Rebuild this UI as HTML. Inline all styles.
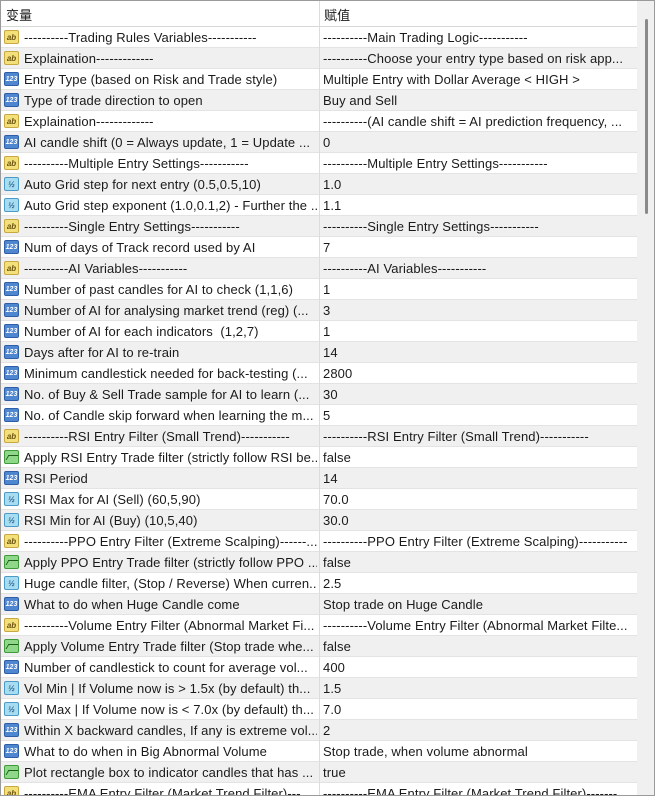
<!DOCTYPE html>
<html><head><meta charset="utf-8"><style>
*{margin:0;padding:0;box-sizing:border-box}
body{width:655px;height:796px;overflow:hidden;background:#fff;font-family:"Liberation Sans","Noto Sans CJK SC",sans-serif;font-size:13px;letter-spacing:0.1px;color:#1a1a1a;position:relative}
.wrap{position:absolute;left:0;top:0;width:655px;height:796px;border:1px solid #9a9a9a;overflow:hidden}
.hdr{position:absolute;left:0;top:0;width:636px;height:26px;border-bottom:1px solid #d8d8d8;background:#fff}
.hdr span{position:absolute;top:4px}
.rows{position:absolute;left:0;top:26px;width:636px}
.r{position:relative;height:21px;border-bottom:1px solid #e3e3e3;white-space:nowrap}
.r:nth-child(odd){background:#fff}
.r:nth-child(even){background:#f0f0f0}
.a{position:absolute;left:23px;top:3px;width:293px;overflow:hidden}
.b{position:absolute;left:322px;top:3px;width:312px;overflow:hidden}
.div{position:absolute;left:318px;top:0;width:1px;height:796px;background:#dcdcdc}
.i{position:absolute;left:3px;top:3px;width:15px;height:14px;border-radius:2px;font-size:8px;line-height:13px;text-align:center;font-weight:bold;letter-spacing:0}
.ab{background:#f3e07a;border:1px solid #c8a840;color:#6b5210}
.n{background:#4f86d0;border:1px solid #2f5ea8;color:#fff;font-size:7px}
.v{background:#a8dcf0;border:1px solid #4a9cc8;color:#1f5c8a}
.g{background:#8fd88a;border:1px solid #3f9a3a}
.g:after{content:"";position:absolute;left:2px;top:4px;width:9px;height:4px;border-left:1.5px solid #1d5c1a;border-top:1.5px solid #1d5c1a;transform:skewX(-30deg)}
.sb{position:absolute;left:636px;top:0;width:19px;height:796px;background:#f0f0f0}
.th{position:absolute;left:644px;top:18px;width:3px;height:195px;background:#8a8a8a;border-radius:2px}
</style></head><body><div class="wrap">
<div class="hdr"><span style="left:5px">变量</span><span style="left:323px">赋值</span></div>
<div class="rows">
<div class="r"><i class="i ab">ab</i><span class="a">----------Trading Rules Variables-----------</span><span class="b">----------Main Trading Logic-----------</span></div>
<div class="r"><i class="i ab">ab</i><span class="a">Explaination-------------</span><span class="b">----------Choose your entry type based on risk app...</span></div>
<div class="r"><i class="i n">123</i><span class="a">Entry Type (based on Risk and Trade style)</span><span class="b">Multiple Entry with Dollar Average &lt; HIGH &gt;</span></div>
<div class="r"><i class="i n">123</i><span class="a">Type of trade direction to open</span><span class="b">Buy and Sell</span></div>
<div class="r"><i class="i ab">ab</i><span class="a">Explaination-------------</span><span class="b">----------(AI candle shift = AI prediction frequency, ...</span></div>
<div class="r"><i class="i n">123</i><span class="a">AI candle shift (0 = Always update, 1 = Update ...</span><span class="b">0</span></div>
<div class="r"><i class="i ab">ab</i><span class="a">----------Multiple Entry Settings-----------</span><span class="b">----------Multiple Entry Settings-----------</span></div>
<div class="r"><i class="i v">½</i><span class="a">Auto Grid step for next entry (0.5,0.5,10)</span><span class="b">1.0</span></div>
<div class="r"><i class="i v">½</i><span class="a">Auto Grid step exponent (1.0,0.1,2) - Further the ...</span><span class="b">1.1</span></div>
<div class="r"><i class="i ab">ab</i><span class="a">----------Single Entry Settings-----------</span><span class="b">----------Single Entry Settings-----------</span></div>
<div class="r"><i class="i n">123</i><span class="a">Num of days of Track record used by AI</span><span class="b">7</span></div>
<div class="r"><i class="i ab">ab</i><span class="a">----------AI Variables-----------</span><span class="b">----------AI Variables-----------</span></div>
<div class="r"><i class="i n">123</i><span class="a">Number of past candles for AI to check (1,1,6)</span><span class="b">1</span></div>
<div class="r"><i class="i n">123</i><span class="a">Number of AI for analysing market trend (reg) (...</span><span class="b">3</span></div>
<div class="r"><i class="i n">123</i><span class="a">Number of AI for each indicators&nbsp; (1,2,7)</span><span class="b">1</span></div>
<div class="r"><i class="i n">123</i><span class="a">Days after for AI to re-train</span><span class="b">14</span></div>
<div class="r"><i class="i n">123</i><span class="a">Minimum candlestick needed for back-testing (...</span><span class="b">2800</span></div>
<div class="r"><i class="i n">123</i><span class="a">No. of Buy &amp; Sell Trade sample for AI to learn (...</span><span class="b">30</span></div>
<div class="r"><i class="i n">123</i><span class="a">No. of Candle skip forward when learning the m...</span><span class="b">5</span></div>
<div class="r"><i class="i ab">ab</i><span class="a">----------RSI Entry Filter (Small Trend)-----------</span><span class="b">----------RSI Entry Filter (Small Trend)-----------</span></div>
<div class="r"><i class="i g"></i><span class="a">Apply RSI Entry Trade filter (strictly follow RSI be...</span><span class="b">false</span></div>
<div class="r"><i class="i n">123</i><span class="a">RSI Period</span><span class="b">14</span></div>
<div class="r"><i class="i v">½</i><span class="a">RSI Max for AI (Sell) (60,5,90)</span><span class="b">70.0</span></div>
<div class="r"><i class="i v">½</i><span class="a">RSI Min for AI (Buy) (10,5,40)</span><span class="b">30.0</span></div>
<div class="r"><i class="i ab">ab</i><span class="a">----------PPO Entry Filter (Extreme Scalping)------...</span><span class="b">----------PPO Entry Filter (Extreme Scalping)-----------</span></div>
<div class="r"><i class="i g"></i><span class="a">Apply PPO Entry Trade filter (strictly follow PPO ...</span><span class="b">false</span></div>
<div class="r"><i class="i v">½</i><span class="a">Huge candle filter, (Stop / Reverse) When curren...</span><span class="b">2.5</span></div>
<div class="r"><i class="i n">123</i><span class="a">What to do when Huge Candle come</span><span class="b">Stop trade on Huge Candle</span></div>
<div class="r"><i class="i ab">ab</i><span class="a">----------Volume Entry Filter (Abnormal Market Fi...</span><span class="b">----------Volume Entry Filter (Abnormal Market Filte...</span></div>
<div class="r"><i class="i g"></i><span class="a">Apply Volume Entry Trade filter (Stop trade whe...</span><span class="b">false</span></div>
<div class="r"><i class="i n">123</i><span class="a">Number of candlestick to count for average vol...</span><span class="b">400</span></div>
<div class="r"><i class="i v">½</i><span class="a">Vol Min | If Volume now is &gt; 1.5x (by default) th...</span><span class="b">1.5</span></div>
<div class="r"><i class="i v">½</i><span class="a">Vol Max | If Volume now is &lt; 7.0x (by default) th...</span><span class="b">7.0</span></div>
<div class="r"><i class="i n">123</i><span class="a">Within X backward candles, If any is extreme vol...</span><span class="b">2</span></div>
<div class="r"><i class="i n">123</i><span class="a">What to do when in Big Abnormal Volume</span><span class="b">Stop trade, when volume abnormal</span></div>
<div class="r"><i class="i g"></i><span class="a">Plot rectangle box to indicator candles that has ...</span><span class="b">true</span></div>
<div class="r"><i class="i ab">ab</i><span class="a">----------EMA Entry Filter (Market Trend Filter)---</span><span class="b">----------EMA Entry Filter (Market Trend Filter)-------</span></div>
</div>
<div class="div"></div>
<div class="sb"></div><div class="th"></div>
</div></body></html>
